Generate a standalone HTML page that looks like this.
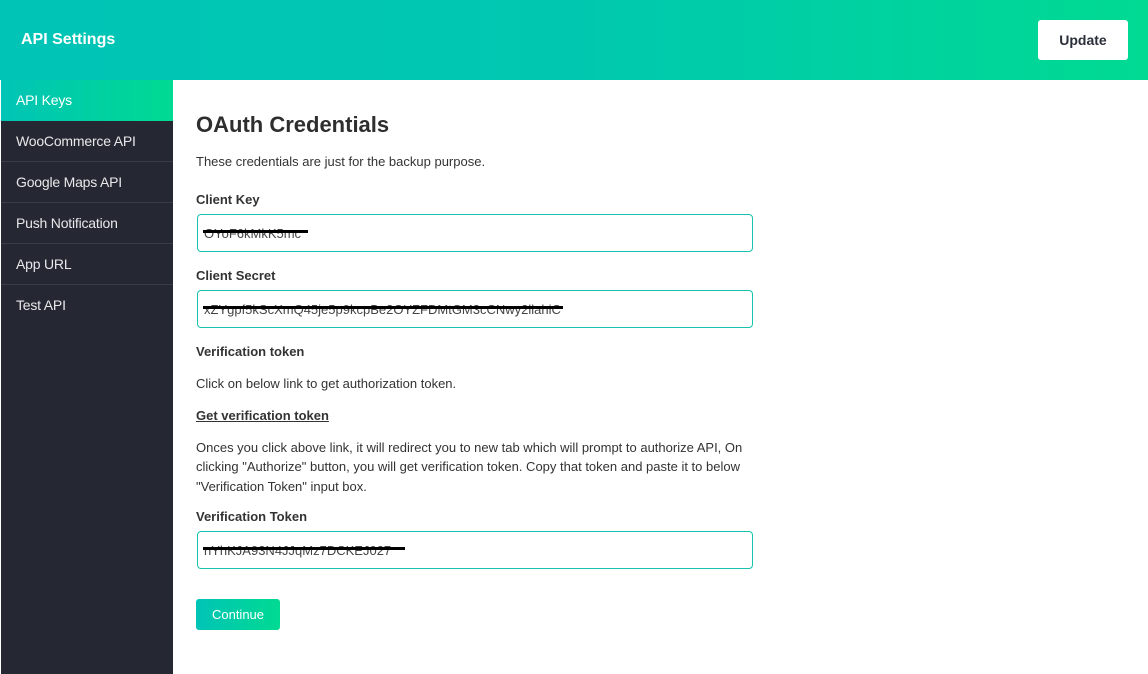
<!DOCTYPE html>
<html><head><style>
*{margin:0;padding:0;box-sizing:border-box}
body{width:1148px;height:674px;overflow:hidden;font-family:"Liberation Sans",Arial,sans-serif;background:#fff;position:relative;color:#333}
.hdr{position:absolute;left:0;top:0;width:1148px;height:80px;background:linear-gradient(90deg,#00c4b6 0%,#00c8b0 50%,#00da92 100%)}
.hdr h1{position:absolute;left:21px;top:31px;font-size:16px;color:#fff;font-weight:bold}
.upd{position:absolute;left:1038px;top:20px;width:90px;height:40px;background:#fff;border-radius:3px;font-size:14px;font-weight:bold;color:#2b2f3a;text-align:center;line-height:40px}
.side{position:absolute;left:1px;top:80px;width:172px;height:594px;background:#252833}
.side div{height:41px;line-height:40px;padding-left:15px;color:#e8e8ea;font-size:14px;border-bottom:1px solid #3a3d48;letter-spacing:-0.2px}
.side .act{background:linear-gradient(90deg,#00c4b6,#00da92);color:#fff;border-bottom:none}
.main{position:absolute;left:196px;top:0}
h2{position:absolute;left:0;top:112px;font-size:22px;font-weight:bold;color:#2e2e2e;white-space:nowrap}
.t{position:absolute;left:0;font-size:13px;color:#333;white-space:nowrap}
.l{position:absolute;left:0;font-size:13px;font-weight:bold;color:#333;white-space:nowrap}
.in{position:absolute;left:1px;width:556px;height:38px;border:1px solid #17c3ae;border-radius:4px}
.in span{position:absolute;left:6px;top:11px;font-size:13px;color:#444;white-space:nowrap}
.in i{position:absolute;left:5px;top:15px;height:3px;background:#000}
.btn{position:absolute;left:0;top:599px;width:84px;height:31px;border-radius:3px;background:linear-gradient(90deg,#00c4b6,#00da92);color:#fff;font-size:13px;text-align:center;line-height:31px}
</style></head><body>
<div class="hdr"><h1>API Settings</h1><div class="upd">Update</div></div>
<div class="side">
<div class="act">API Keys</div><div>WooCommerce API</div><div>Google Maps API</div><div>Push Notification</div><div>App URL</div><div style="border:none">Test API</div>
</div>
<div class="main">
<h2>OAuth Credentials</h2>
<div class="t" style="top:154px">These credentials are just for the backup purpose.</div>
<div class="l" style="top:192px">Client Key</div>
<div class="in" style="top:214px"><span>OYoF6kMkK5mc</span><i style="width:105px"></i></div>
<div class="l" style="top:268px">Client Secret</div>
<div class="in" style="top:290px"><span>xZYgpf5kScXmQ45je5p9kcpBe2OYZFDMtGM3cCNwy2llahiC</span><i style="width:360px"></i></div>
<div class="l" style="top:344px">Verification token</div>
<div class="t" style="top:376px">Click on below link to get authorization token.</div>
<div class="l" style="top:408px;text-decoration:underline">Get verification token</div>
<div class="t" style="top:438px;line-height:19.3px">Onces you click above link, it will redirect you to new tab which will prompt to authorize API, On<br>clicking "Authorize" button, you will get verification token. Copy that token and paste it to below<br>"Verification Token" input box.</div>
<div class="l" style="top:509px">Verification Token</div>
<div class="in" style="top:531px"><span>nYhKJA93N4JJqMz7DCKEJ027</span><i style="width:202px"></i></div>
<div class="btn">Continue</div>
</div>
</body></html>
